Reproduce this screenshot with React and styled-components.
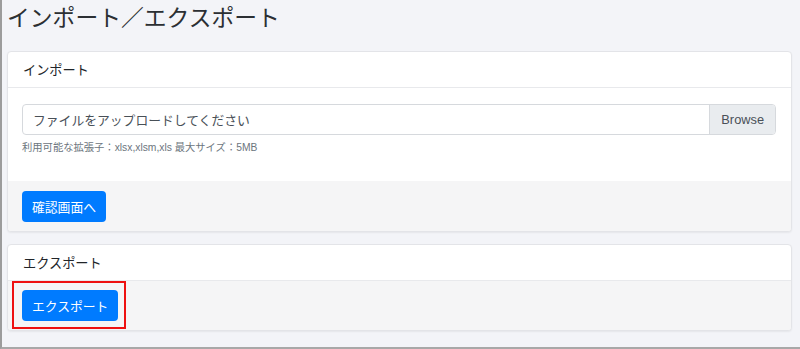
import styled, { createGlobalStyle } from "styled-components";

const GlobalStyle = createGlobalStyle`
  html, body {
    margin: 0;
    padding: 0;
    background: #f3f4f8;
  }
  * {
    box-sizing: border-box;
  }
`;

const Page = styled.div`
  height: 349px;
  padding: 0 8px 0 5px;
  background: #f3f4f8;
  border-left: 2px solid #9c9c9c;
  border-bottom: 2px solid #a8a8a8;
  font-family: "Liberation Sans", "Noto Sans CJK JP", sans-serif;
  color: #212529;
  overflow: hidden;
`;

const Title = styled.h1`
  margin: 3px 0 0;
  height: 48px;
  font-size: 22.8px;
  font-weight: 400;
  line-height: 30px;
  color: #2b2f33;
`;

const Card = styled.section`
  display: flex;
  flex-direction: column;
  background: #fff;
  border: 1px solid #e3e4e8;
  border-radius: 4px;
  box-shadow: 0 1px 2px rgba(0, 0, 0, 0.06);
  overflow: hidden;
  & + & {
    margin-top: 12px;
  }
`;

const CardHeader = styled.header`
  height: 36px;
  padding: 0 15px;
  display: flex;
  align-items: center;
  font-size: 13.2px;
  border-bottom: 1px solid #e8e9ec;
`;

const CardBody = styled.div`
  padding: 16px 15px 27px 14px;
`;

const CardFooter = styled.footer`
  background: #f5f5f6;
  padding: ${(p) => (p.$tight ? "9px 15px 9px 14px" : "10px 15px 9px 14px")};
  display: flex;
`;

const FileField = styled.div`
  display: flex;
  height: 31px;
  border: 1px solid #d6d9dd;
  border-radius: 4px;
  overflow: hidden;
`;

const FileLabel = styled.div`
  flex: 1;
  display: flex;
  align-items: center;
  padding: 0 10px;
  font-size: 12.8px;
  color: #495057;
`;

const BrowseButton = styled.div`
  display: flex;
  align-items: center;
  padding: 0 11px;
  background: #e9ecef;
  border-left: 1px solid #d6d9dd;
  font-size: 12.8px;
  color: #495057;
`;

const HelpText = styled.small`
  display: block;
  margin-top: 4px;
  font-size: 10.3px;
  color: #6c757d;
`;

const Button = styled.button`
  height: 31px;
  padding: 0 10px;
  border: none;
  border-radius: 4px;
  background: #007bff;
  color: #fff;
  font-family: inherit;
  font-size: 12.8px;
`;

const Highlight = styled.span`
  position: relative;
  display: inline-flex;
  &::after {
    content: "";
    position: absolute;
    left: -10px;
    right: -8px;
    top: -9px;
    bottom: -8px;
    border: 2px solid #ee1111;
    pointer-events: none;
  }
`;

export default function App() {
  return (
    <>
      <GlobalStyle />
      <Page>
        <Title>インポート／エクスポート</Title>

        <Card>
          <CardHeader>インポート</CardHeader>
          <CardBody>
            <FileField>
              <FileLabel>ファイルをアップロードしてください</FileLabel>
              <BrowseButton>Browse</BrowseButton>
            </FileField>
            <HelpText>利用可能な拡張子：xlsx,xlsm,xls 最大サイズ：5MB</HelpText>
          </CardBody>
          <CardFooter>
            <Button>確認画面へ</Button>
          </CardFooter>
        </Card>

        <Card>
          <CardHeader>エクスポート</CardHeader>
          <CardFooter $tight>
            <Highlight>
              <Button>エクスポート</Button>
            </Highlight>
          </CardFooter>
        </Card>
      </Page>
    </>
  );
}
